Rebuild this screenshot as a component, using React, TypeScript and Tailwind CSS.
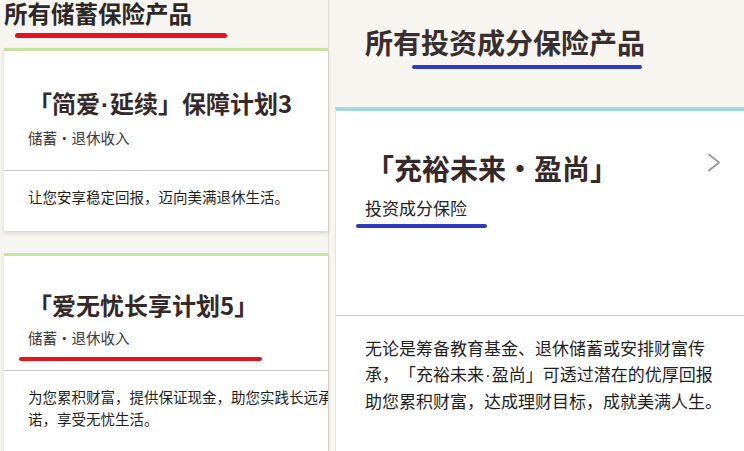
import React from 'react';

const font = "font-['Noto_Sans_CJK_SC','Noto_Sans',sans-serif]";

// narrow latin middle dot, as in the reference
const Dot: React.FC = () => <span className="font-['Liberation_Sans',sans-serif] px-[1px]">·</span>;

const Chevron: React.FC = () => (
  <svg width="14" height="19" viewBox="0 0 14 19" fill="none">
    <polyline points="2,1.5 12,9.5 2,17.5" stroke="#9b9b9b" strokeWidth="2" strokeLinecap="round" strokeLinejoin="round" />
  </svg>
);

interface SavingsCardProps {
  title: React.ReactNode;
  desc: string;
  titlePad: string;
  marked?: boolean;
}

const SavingsCard: React.FC<SavingsCardProps> = ({ title, desc, titlePad, marked }) => (
  <div className="ml-[4px] w-[324px] overflow-hidden bg-white border-t-[3px] border-[#c6e3a0] shadow-[0_2px_4px_rgba(0,0,0,0.14)]">
    <div className={`${titlePad} pl-[24px]`}>
      <h2 className="text-[24px] leading-[30px] font-bold text-[#35292a] whitespace-nowrap">{title}</h2>
    </div>
    <div className="relative">
      <p className="mt-[8px] pl-[24px] text-[14.5px] leading-[20px] text-[#3a3a3a]">储蓄·退休收入</p>
      {marked && (
        <div className="absolute left-[15px] top-[29px] w-[243px] h-[4px] rounded-full bg-[#e3141c]" />
      )}
    </div>
    <div className="mt-[22px] h-px bg-[#c9c9c9]" />
    <p className="mt-[15px] pb-[33px] pl-[24px] w-[334px] text-[14.5px] leading-[22px] text-[#1f1f1f]">{desc}</p>
  </div>
);

export default function App() {
  return (
    <div className={`${font} [text-spacing-trim:space-all] w-[744px] h-[451px] overflow-hidden flex bg-[#f7f5f0]`}>
      {/* left: savings */}
      <div className="w-[329px] shrink-0 border-r border-[#dedcd6] flex flex-col">
        <div className="relative h-[51px]">
          <h1 className="pl-[4px] text-[23.5px] leading-[26px] font-bold text-[#2c2828]">所有储蓄保险产品</h1>
          <div className="absolute left-[15px] top-[33px] w-[212px] h-[5px] rounded-full bg-[#e3141c]" />
        </div>
        <SavingsCard
          title={<>「简爱<Dot />延续」保障计划3</>}
          desc="让您安享稳定回报，迈向美满退休生活。"
          titlePad="pt-[37px]"
        />
        <div className="h-[22px] shrink-0" />
        <SavingsCard
          title="「爱无忧长享计划5」"
          desc="为您累积财富，提供保证现金，助您实践长远承诺，享受无忧生活。"
          titlePad="pt-[34px]"
          marked
        />
      </div>

      {/* right: investment-linked */}
      <div className="flex-1 pl-[6px] flex flex-col">
        <div className="relative pt-[25px] pl-[30px]">
          <h1 className="text-[28px] leading-[35px] font-bold text-[#3a2f2f]">所有投资成分保险产品</h1>
          <div className="absolute left-[77px] top-[65px] w-[230px] h-[4px] rounded-full bg-[#2d3cb8]" />
        </div>
        <div className="mt-[47px] flex-1 bg-white border-t-[4px] border-[#a9d5e3] border-l border-l-[#e2e2e2]">
          <div className="flex items-start justify-between pt-[40px] pl-[30px] pr-[23px]">
            <h2 className="text-[28px] leading-[34px] font-bold text-[#35292a] whitespace-nowrap">「充裕未来·盈尚」</h2>
            <div className="mt-[2px]">
              <Chevron />
            </div>
          </div>
          <div className="relative">
            <p className="mt-[11px] pl-[29px] text-[17px] leading-[24px] text-[#222]">投资成分保险</p>
            <div className="absolute left-[20px] top-[28px] w-[131px] h-[4px] rounded-full bg-[#2d3cb8]" />
          </div>
          <div className="mt-[95px] h-px bg-[#c9c9c9]" />
          <p className="mt-[19px] pl-[29px] w-[389px] text-[17px] leading-[25.5px] text-[#1f1f1f]">
            无论是筹备教育基金、退休储蓄或安排财富传承，「充裕未来<Dot />盈尚」可透过潜在的优厚回报助您累积财富，达成理财目标，成就美满人生。
          </p>
        </div>
      </div>
    </div>
  );
}
